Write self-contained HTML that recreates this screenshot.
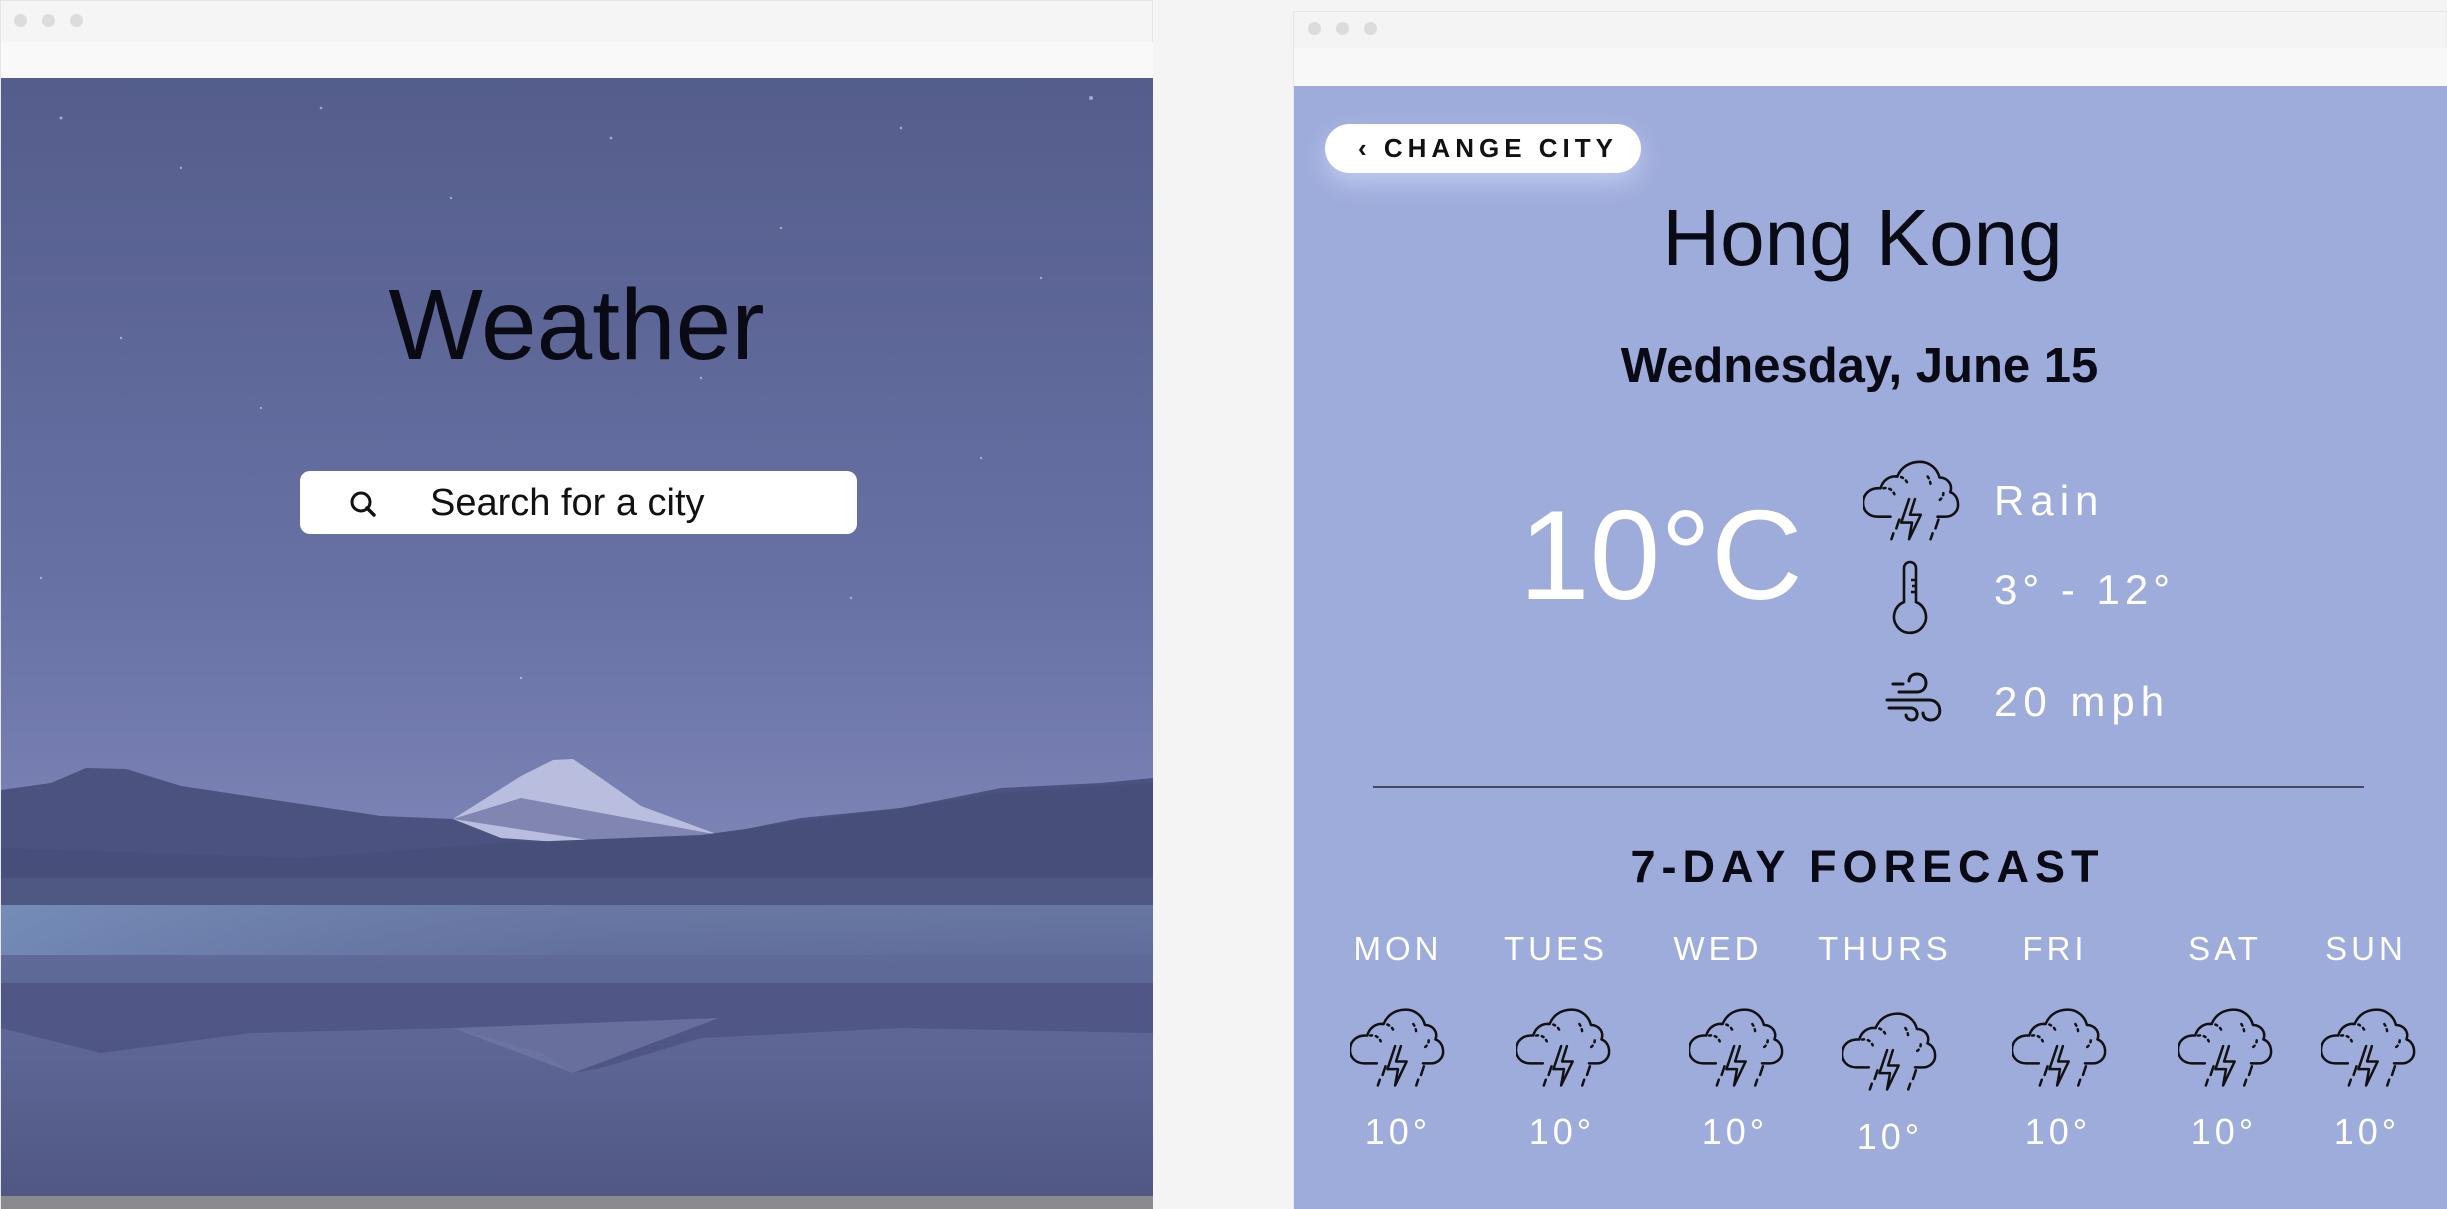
<!DOCTYPE html>
<html><head><meta charset="utf-8">
<style>
*{margin:0;padding:0;box-sizing:border-box}
body{width:2447px;height:1209px;background:#f4f4f4;position:relative;overflow:hidden;font-family:"Liberation Sans",sans-serif}
.abs{position:absolute}
.dot{position:absolute;width:13px;height:13px;border-radius:50%;background:#dcdcdc}
.c{position:absolute;text-align:center;white-space:nowrap}
.day{position:absolute;top:930px;width:160px;margin-left:-80px;text-align:center;color:#fff;font-size:33px;letter-spacing:4px}
.ic{position:absolute;width:96px;height:82px;margin-left:-48px}
.tmp{position:absolute;top:1108px;width:120px;margin-left:-60px;text-align:center;color:#fff;font-size:36px;letter-spacing:4px}
</style></head><body>
<svg width="0" height="0" style="position:absolute">
<defs>
<symbol id="storm" viewBox="0 0 100 84">
<g fill="none" stroke="#111" stroke-width="2.6" stroke-linecap="round" stroke-linejoin="round">
<path d="M28,57 H15 C5,57 0,50 0,43 C0,33 8,27 18,28 C20,20 27,15 35,16 C39,6 48,1 58,1 C68,1 76,8 78,17 C86,17 92,24 89,32 C95,34 97,40 97,45 C97,52 91,57 84,57 H76"/>
<path d="M47,39 L39,63 H50 L47,80 L59,55 H48 L53,39"/>
<path d="M37,60 L34,69 M31,74 L29,80 M77,60 L74,69 M71,74 L69,80"/>
<path d="M21,28 C25,27 30,29 32,34 M33,16 C38,15 43,18 45,22 M66,16 C68,19 69,22 69,26 M82,33 C82,36 80,39 78,40" stroke-dasharray="2 4"/>
</g></symbol>
</defs></svg>

<!-- Left window -->
<div class="abs" style="left:0;top:0;width:1153px;height:1209px;background:#f5f5f5;border:1px solid #e6e6e6"></div>
<div class="dot" style="left:14px;top:14px"></div><div class="dot" style="left:42px;top:14px"></div><div class="dot" style="left:70px;top:14px"></div>
<div class="abs" style="left:1px;top:42px;width:1152px;height:36px;background:#f9f9f9"></div>
<svg class="abs" style="left:1px;top:78px" width="1152" height="1131" viewBox="0 0 1152 1131">
<defs>
<linearGradient id="sky" x1="0" y1="0" x2="0" y2="1">
<stop offset="0" stop-color="#545d8b"/><stop offset="0.45" stop-color="#6771a4"/><stop offset="0.75" stop-color="#8389bb"/><stop offset="1" stop-color="#8c8fc0"/>
</linearGradient>
<linearGradient id="water" x1="0" y1="0" x2="0" y2="1">
<stop offset="0" stop-color="#66769f"/><stop offset="0.15" stop-color="#5f6a98"/><stop offset="0.5" stop-color="#5d6594"/><stop offset="1" stop-color="#4f5682"/>
</linearGradient>
<linearGradient id="mist" x1="0" y1="0" x2="1" y2="0">
<stop offset="0" stop-color="#7f9cc8" stop-opacity="0.6"/><stop offset="0.5" stop-color="#6f80ad" stop-opacity="0.3"/><stop offset="1" stop-color="#6f80ad" stop-opacity="0.15"/>
</linearGradient>
</defs>
<rect width="1152" height="1131" fill="url(#sky)"/>
<g fill="#dfe3ff" opacity="0.55">
<circle cx="60" cy="40" r="1.5"/><circle cx="180" cy="90" r="1.2"/><circle cx="320" cy="30" r="1.3"/><circle cx="450" cy="120" r="1.2"/><circle cx="610" cy="60" r="1.4"/><circle cx="780" cy="150" r="1.2"/><circle cx="900" cy="50" r="1.3"/><circle cx="1090" cy="20" r="2"/><circle cx="1040" cy="200" r="1.2"/><circle cx="120" cy="260" r="1.2"/><circle cx="260" cy="330" r="1.2"/><circle cx="700" cy="300" r="1.2"/><circle cx="980" cy="380" r="1.2"/><circle cx="40" cy="500" r="1.2"/><circle cx="850" cy="520" r="1.2"/><circle cx="520" cy="600" r="1.2"/>
</g>
<path d="M0,712 L50,705 L85,690 L125,691 L180,708 L300,726 L380,738 L452,741 L540,757 L600,770 L700,760 L800,740 L900,730 L1000,710 L1100,705 L1152,700 L1152,830 L0,830Z" fill="#4b5280"/>
<path d="M452,741 L520,698 L552,682 L572,681 L600,700 L640,728 L718,757 L640,770 L500,760Z" fill="#b9bede"/>
<path d="M452,741 L520,720 L600,735 L718,757 L640,770Z" fill="#7277a6" opacity="0.8"/>
<path d="M0,770 L300,780 L500,765 L700,757 L900,730 L1000,715 L1100,708 L1152,705 L1152,830 L0,830Z" fill="#474e7a"/>
<rect y="800" width="1152" height="30" fill="#4f5783"/>
<rect y="827" width="1152" height="304" fill="url(#water)"/>
<rect y="827" width="1152" height="50" fill="url(#mist)"/>
<path d="M0,905 L1152,905 L1152,955 L900,950 L700,960 L600,990 L572,995 L540,975 L452,950 L250,955 L100,975 L60,965 L0,950Z" fill="#4c5381" opacity="0.8"/>
<path d="M452,950 L572,995 L718,940Z" fill="#737aa6" opacity="0.7"/>
<rect y="1118" width="1152" height="13" fill="#8a8a8f"/>
</svg>
<div class="c" style="left:0;width:1153px;top:268px;font-size:100px;color:#0a0a14">Weather</div>
<div class="abs" style="left:300px;top:471px;width:557px;height:63px;background:#fff;border-radius:10px"></div>
<svg class="abs" style="left:348px;top:489px" width="30" height="30" viewBox="0 0 30 30"><circle cx="13" cy="13" r="9" fill="none" stroke="#111" stroke-width="3"/><path d="M19,19 L26,26" stroke="#111" stroke-width="3.5" stroke-linecap="round"/></svg>
<div class="abs" style="left:430px;top:482px;font-size:38px;color:#111;white-space:nowrap">Search for a city</div>

<!-- Right window -->
<div class="abs" style="left:1293px;top:11px;width:1154px;height:1198px;background:#f4f4f4;border:1px solid #e6e6e6"></div>
<div class="dot" style="left:1308px;top:22px"></div><div class="dot" style="left:1336px;top:22px"></div><div class="dot" style="left:1364px;top:22px"></div>
<div class="abs" style="left:1294px;top:48px;width:1153px;height:38px;background:#f8f8f8"></div>
<div class="abs" style="left:1294px;top:86px;width:1153px;height:1123px;background:#9eacdb"></div>
<div class="abs" style="left:1325px;top:124px;width:316px;height:49px;background:#fff;border-radius:25px;box-shadow:0 10px 25px rgba(200,210,245,0.8)"></div>
<div class="abs" style="left:1358px;top:133px;font-size:26px;font-weight:bold;letter-spacing:5px;color:#111;white-space:nowrap">‹ CHANGE CITY</div>
<div class="c" style="left:1294px;width:1137px;top:192px;font-size:80px;color:#0a0a14">Hong Kong</div>
<div class="c" style="left:1294px;width:1131px;top:338px;font-size:49px;font-weight:bold;color:#0a0a14">Wednesday, June 15</div>
<div class="abs" style="left:1519px;top:482px;font-size:127px;color:#fff;white-space:nowrap">10°C</div>
<svg class="abs" style="left:1863px;top:460px" width="98" height="84"><use href="#storm"/></svg>
<svg class="abs" style="left:1890px;top:560px" width="40" height="76" viewBox="0 0 40 76"><g fill="none" stroke="#111" stroke-width="2.6"><path d="M14,42 V8 A6,6 0 0 1 26,8 V42 A16,16 0 1 1 14,42Z"/><path d="M26,20 H21 M26,26 H22 M26,32 H21"/></g></svg>
<svg class="abs" style="left:1885px;top:668px" width="62" height="56" viewBox="0 0 62 56"><g fill="none" stroke="#111" stroke-width="3" stroke-linecap="round"><path d="M14,24 H32 C44,24 44,6 32,6 C26,6 24,10 24,13"/><path d="M2,32 H44 C58,32 58,52 46,52 C40,52 38,48 38,45"/><path d="M4,40 H26 C34,40 34,52 27,52 C22,52 21,48 21,47"/><path d="M8,16 H18"/></g></svg>
<div class="abs" style="left:1994px;top:477px;font-size:42px;color:#fff;letter-spacing:6px">Rain</div>
<div class="abs" style="left:1994px;top:566px;font-size:42px;color:#fff;letter-spacing:5px;white-space:nowrap">3° - 12°</div>
<div class="abs" style="left:1994px;top:678px;font-size:42px;color:#fff;letter-spacing:6px;white-space:nowrap">20 mph</div>
<div class="abs" style="left:1373px;top:786px;width:991px;height:2px;background:#444a5e"></div>
<div class="c" style="left:1294px;width:1147px;top:841px;font-size:45px;font-weight:bold;letter-spacing:6px;color:#0a0a14">7-DAY FORECAST</div>

<div class="day" style="left:1398px">MON</div>
<div class="day" style="left:1556px">TUES</div>
<div class="day" style="left:1718px">WED</div>
<div class="day" style="left:1885px">THURS</div>
<div class="day" style="left:2055px">FRI</div>
<div class="day" style="left:2225px">SAT</div>
<div class="day" style="left:2366px">SUN</div>

<svg class="ic" style="left:1398px;top:1008px"><use href="#storm"/></svg>
<svg class="ic" style="left:1564px;top:1008px"><use href="#storm"/></svg>
<svg class="ic" style="left:1737px;top:1008px"><use href="#storm"/></svg>
<svg class="ic" style="left:1890px;top:1012px"><use href="#storm"/></svg>
<svg class="ic" style="left:2060px;top:1008px"><use href="#storm"/></svg>
<svg class="ic" style="left:2226px;top:1008px"><use href="#storm"/></svg>
<svg class="ic" style="left:2369px;top:1008px"><use href="#storm"/></svg>

<div class="tmp" style="left:1398px;top:1111px">10°</div>
<div class="tmp" style="left:1562px;top:1111px">10°</div>
<div class="tmp" style="left:1735px;top:1111px">10°</div>
<div class="tmp" style="left:1890px;top:1116px">10°</div>
<div class="tmp" style="left:2058px;top:1111px">10°</div>
<div class="tmp" style="left:2224px;top:1111px">10°</div>
<div class="tmp" style="left:2367px;top:1111px">10°</div>
</body></html>
